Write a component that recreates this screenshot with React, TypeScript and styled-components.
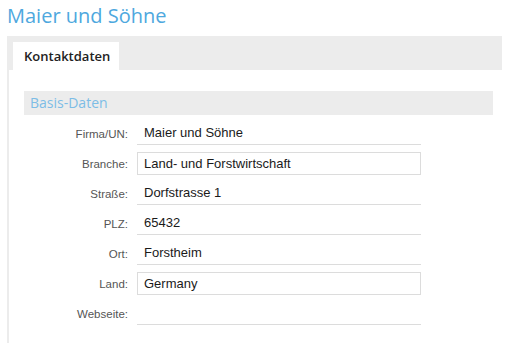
import styled, { createGlobalStyle, css } from 'styled-components';

const GlobalStyle = createGlobalStyle`
  body {
    margin: 0;
    background: #fff;
    font-family: 'Open Sans', 'Liberation Sans', sans-serif;
  }
`;

const fields = [
  { label: 'Firma/UN:', value: 'Maier und Söhne', boxed: false },
  { label: 'Branche:', value: 'Land- und Forstwirtschaft', boxed: true },
  { label: 'Straße:', value: 'Dorfstrasse 1', boxed: false },
  { label: 'PLZ:', value: '65432', boxed: false },
  { label: 'Ort:', value: 'Forstheim', boxed: false },
  { label: 'Land:', value: 'Germany', boxed: true },
  { label: 'Webseite:', value: '', boxed: false },
];

export default function App() {
  return (
    <StyledPage>
      <GlobalStyle />
      <StyledTitle>Maier und Söhne</StyledTitle>
      <StyledTabBar>
        <StyledTab>Kontaktdaten</StyledTab>
      </StyledTabBar>
      <StyledPanel>
        <StyledSectionHeader>Basis-Daten</StyledSectionHeader>
        <StyledForm>
          {fields.map((field) => (
            <StyledRow key={field.label}>
              <StyledLabel>{field.label}</StyledLabel>
              <StyledField $boxed={field.boxed}>{field.value}</StyledField>
            </StyledRow>
          ))}
        </StyledForm>
      </StyledPanel>
    </StyledPage>
  );
}

const StyledPage = styled.div`
  padding: 0 6px 0 7px;
`;

const StyledTitle = styled.h1`
  margin: 0;
  height: 36px;
  font-size: 20px;
  font-weight: 400;
  line-height: 31px;
  color: #4ea8de;
`;

const StyledTabBar = styled.div`
  display: flex;
  height: 34px;
  padding: 6px 0 0 6px;
  box-sizing: border-box;
  background: #ececec;
`;

const StyledTab = styled.div`
  width: 106px;
  height: 28px;
  padding-left: 11px;
  box-sizing: border-box;
  background: #fff;
  font-size: 13px;
  font-weight: 600;
  line-height: 28px;
  color: #222;
`;

const StyledPanel = styled.div`
  height: 273px;
  padding: 21px 9px 0 15px;
  border-left: 2px solid #ececec;
  box-sizing: border-box;
`;

const StyledSectionHeader = styled.div`
  height: 24px;
  padding-left: 6px;
  background: #ececec;
  font-size: 14px;
  line-height: 24px;
  color: #7dbde6;
`;

const StyledForm = styled.div`
  display: flex;
  flex-direction: column;
  gap: 7px;
  padding-top: 7px;
`;

const StyledRow = styled.div`
  display: grid;
  grid-template-columns: 104px 284px;
  column-gap: 9px;
  align-items: center;
`;

const StyledLabel = styled.div`
  text-align: right;
  font-family: 'Liberation Sans', Arial, sans-serif;
  font-size: 11.5px;
  color: #555;
`;

const StyledField = styled.div`
  height: 23px;
  padding-left: 7px;
  box-sizing: border-box;
  border-bottom: 1px solid #dcdcdc;
  font-family: 'Liberation Sans', Arial, sans-serif;
  font-size: 13px;
  line-height: 22px;
  color: #1a1a1a;
  ${({ $boxed }) =>
    $boxed &&
    css`
      border: 1px solid #dcdcdc;
      padding-left: 6px;
      line-height: 21px;
    `}
`;
